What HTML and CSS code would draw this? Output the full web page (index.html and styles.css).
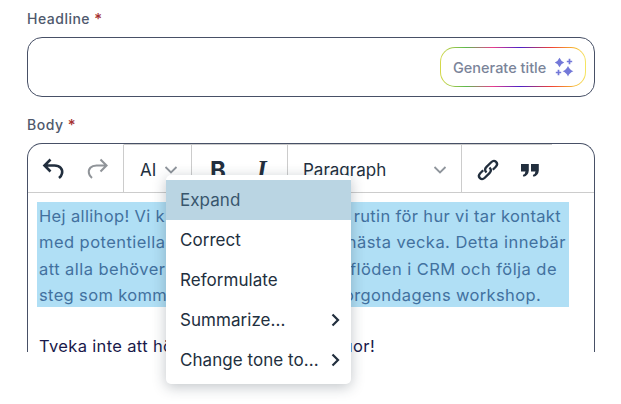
FILE: index.html
```html
<!DOCTYPE html>
<html lang="sv">
<head>
  <meta charset="utf-8">
  <title>Edit post</title>
  <link rel="stylesheet" href="styles.css">
</head>
<body>
  <form class="post-form">
    <!-- Headline -->
    <div class="label">Headline <span class="required">*</span></div>
    <div class="headline-box">
      <button type="button" class="generate-btn">
        <span>Generate title</span>
        <svg width="20" height="20" viewBox="0 0 20 20">
          <path d="M5.500 .8Q7 4.300 10.200 5.500Q7 6.700 5.500 10.200Q4 6.700 .8 5.500Q4 4.300 5.500 .8zM14 9Q15.700 13 19.400 14.200Q15.700 15.400 14 19.400Q12.300 15.400 8.600 14.200Q12.300 13 14 9z"/>
          <path class="small-stars" d="M15.500 1.800v5.400M12.800 4.500h5.400M4.500 12.800v5.400M1.800 15.500h5.400"/>
        </svg>
      </button>
    </div>

    <!-- Body -->
    <div class="label body-label">Body <span class="required">*</span></div>
    <div class="editor">
      <div class="toolbar">
        <div class="group history">
          <svg width="24" height="24" viewBox="0 0 24 24"><path d="M9.500 1.500L3.500 7.500L9.500 13.500M3.500 7.500H13.500C19 7.500 22 11 21 15.500Q20.500 18 18 20"/></svg>
          <svg class="disabled" width="24" height="24" viewBox="0 0 24 24"><path d="M14.500 1.500L20.500 7.500L14.500 13.500M20.500 7.500H10.500C5 7.500 2 11 3 15.500Q3.500 18 6 20"/></svg>
        </div>
        <div class="group ai">
          <span>AI</span>
          <svg class="chevron" width="14" height="10" viewBox="0 0 14 10"><path d="M1.500 2L7 7.500L12.500 2"/></svg>
        </div>
        <div class="group format">
          <b>B</b>
          <i>I</i>
        </div>
        <div class="group block">
          <span>Paragraph</span>
          <svg class="chevron" width="14" height="10" viewBox="0 0 14 10"><path d="M1.500 2L7 7.500L12.500 2"/></svg>
        </div>
        <div class="group insert">
          <svg class="link" width="24" height="24" viewBox="0 0 24 24"><path d="M10.500 14.500C8.200 12.200 8.800 10.600 10.500 8.900L15.200 4.200C18.700.8 23.200 5.300 19.800 8.800L16.800 11.800M13.500 9.500C15.800 11.800 15.200 13.400 13.500 15.100L8.800 19.800C5.300 23.200.8 18.700 4.200 15.200L7.200 12.200"/></svg>
          <svg class="quote" width="20" height="15" viewBox="0 0 20 15"><path d="M1 1H8.800V7.500Q8.500 12.500 3.500 13.800L2.800 12Q5.500 10.800 5.500 8.500H1zM11 1H18.800V7.500Q18.500 12.500 13.500 13.800L12.800 12Q15.500 10.800 15.500 8.500H11z"/></svg>
        </div>
      </div>

      <div class="content">
        <div class="selection">
          <p class="line line-1"><span>Hej allihop! Vi k</span><span>rutin för hur vi tar kontakt</span></p>
          <p class="line line-2"><span>med potentiella</span><span>nästa vecka. Detta innebär</span></p>
          <p class="line line-3"><span>att alla behöver</span><span>flöden i CRM och följa de</span></p>
          <p class="line line-4"><span>steg som komm</span><span>morgondagens workshop.</span></p>
        </div>
        <p class="line line-5"><span>Tveka inte att hö</span><span>frågor!</span></p>
      </div>
    </div>

    <!-- AI dropdown -->
    <ul class="menu">
      <li class="active"><span>Expand</span></li>
      <li><span>Correct</span></li>
      <li><span>Reformulate</span></li>
      <li><span>Summarize...</span><svg width="10" height="14" viewBox="0 0 10 14"><path d="M1.500 1.500L7 7L1.500 12.500"/></svg></li>
      <li><span>Change tone to...</span><svg width="10" height="14" viewBox="0 0 10 14"><path d="M1.500 1.500L7 7L1.500 12.500"/></svg></li>
    </ul>
  </form>
</body>
</html>
```
FILE: styles.css
```css
* {
  box-sizing: border-box;
}
body {
  margin: 0;
  height: 404px;
  overflow: hidden;
  background: #fff;
  color: #222f3e;
  font-family: Inter, Arial, sans-serif;
}
svg {
  display: block;
  flex: none;
  fill: none;
}
.post-form {
  position: relative;
  width: 595px;
  height: 404px;
  padding: 9px 0 0 27px;
}
.label {
  height: 20px;
  line-height: 20px;
  font-size: 14px;
  font-weight: 500;
  letter-spacing: 0.5px;
  color: #4f596d;
}
.required {
  font-size: 15px;
  color: #a52f2f;
}
.headline-box {
  display: flex;
  align-items: center;
  justify-content: flex-end;
  height: 60px;
  margin-top: 8px;
  padding-right: 8px;
  border: 1px solid #475066;
  border-radius: 15px;
}
.generate-btn {
  display: flex;
  align-items: center;
  justify-content: space-between;
  width: 146px;
  height: 40px;
  padding: 0 11px 0 12px;
  border: 1px solid transparent;
  border-radius: 15px;
  background:
    linear-gradient(#fff, #fff) padding-box,
    linear-gradient(90deg, #d6d94a 0%, #5cb84d 18%, #e83e8c 36%, #4b20c8 55%, #ef4136 76%, #f7b733 92%, #f5e663 100%) border-box;
  color: #7a8499;
  font: 500 14.5px Inter, Arial, sans-serif;
  white-space: nowrap;
}
.generate-btn svg {
  fill: #7378d8;
}
.generate-btn .small-stars {
  stroke: #7378d8;
  stroke-width: 1.7;
}
.body-label {
  margin-top: 18px;
}

/* Editor */
.editor {
  height: 209px;
  margin-top: 8px;
  overflow: hidden;
  border: 1px solid #475066;
  border-bottom: 0;
  border-radius: 15px 15px 0 0;
}
.toolbar {
  display: flex;
  height: 49px;
  border-bottom: 1px solid #ccc;
  font-size: 17px;
}
.group {
  display: flex;
  align-items: center;
  padding-top: 3px;
  border-top: 1px solid #ccc;
  border-right: 1px solid #ccc;
}
.history {
  width: 96px;
  padding-left: 13px;
  gap: 21px;
  border-top-color: transparent;
}
.history svg {
  stroke: #222f3e;
  stroke-width: 2.6;
}
.history .disabled {
  stroke: #909499;
  stroke-width: 2.1;
}
.chevron {
  stroke: #8f959c;
  stroke-width: 1.8;
}
.ai {
  width: 68px;
  padding-left: 16px;
  gap: 8px;
}
.format {
  width: 96px;
  padding-left: 18px;
}
.format b {
  width: 47px;
  font-size: 24px;
}
.format i {
  font: italic bold 25px "Liberation Serif", serif;
}
.block {
  width: 174px;
  padding: 3px 14px 0 15px;
  justify-content: space-between;
}
.insert {
  width: 90px;
  border-right: 0;
  padding-left: 14px;
  gap: 20px;
}
.link {
  stroke: #222f3e;
  stroke-width: 2.3;
}
.quote {
  fill: #222f3e;
}
.content {
  padding: 9px 0 0 9px;
  color: #19194a;
}
.selection {
  width: 532px;
  height: 105px;
  margin-bottom: 25px;
  background: #b0dff5;
  color: #42719f;
}
.line {
  display: flex;
  justify-content: space-between;
  height: 26.3px;
  margin: 0 0 0 2px;
  line-height: 29px;
  font-size: 16.5px;
  letter-spacing: 0.35px;
  white-space: nowrap;
}
.line-1 {
  width: 522px;
}
.line-2 {
  width: 527px;
  letter-spacing: 0.45px;
}
.line-3 {
  width: 518px;
  letter-spacing: 0.45px;
}
.line-4 {
  width: 502px;
}
.line-5 {
  width: 336px;
}

/* Dropdown menu */
.menu {
  position: absolute;
  top: 175px;
  left: 166px;
  width: 185px;
  height: 209px;
  margin: 0;
  padding: 5px 0;
  border-radius: 5px;
  background: #fff;
  box-shadow: 0 3px 14px rgba(34, 47, 62, 0.28);
  list-style: none;
}
.menu li {
  display: flex;
  align-items: center;
  justify-content: space-between;
  height: 40px;
  padding: 0 10px 0 14px;
  font-size: 17px;
  letter-spacing: 0.05px;
}
.menu li svg {
  stroke: #222f3e;
  stroke-width: 2.2;
}
.menu .active {
  background: #bad5e3;
  color: #38566d;
}
```
